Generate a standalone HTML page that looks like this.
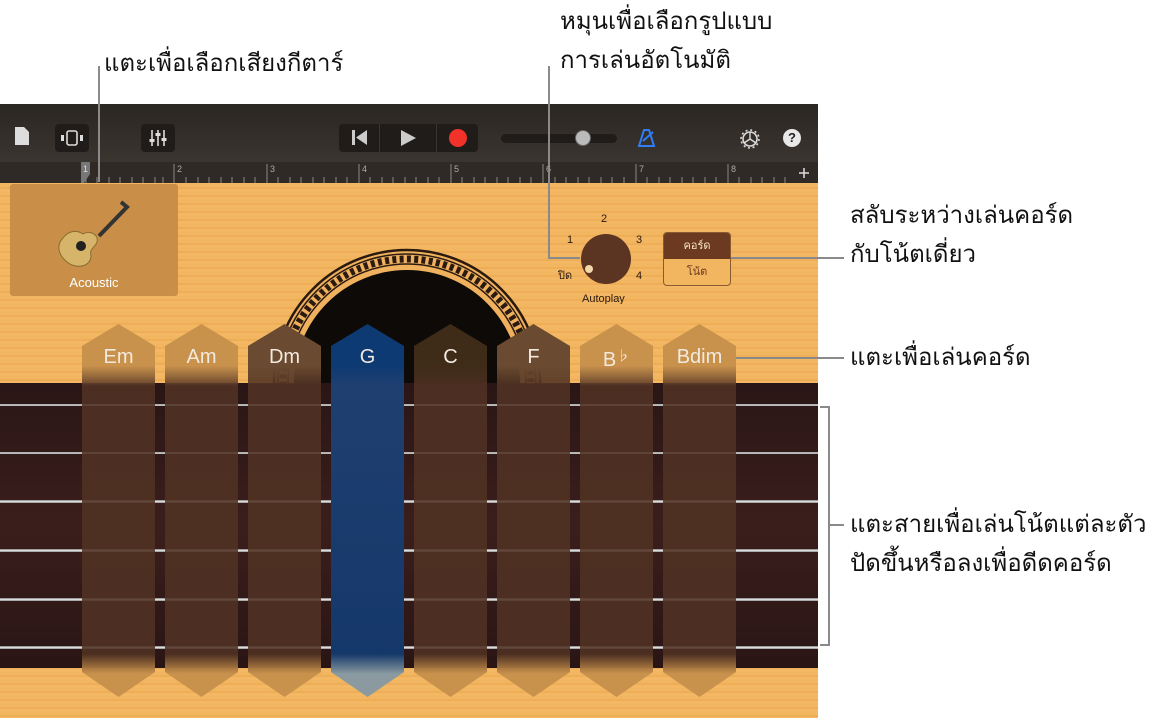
<!DOCTYPE html>
<html><head><meta charset="utf-8"><style>
*{margin:0;padding:0;box-sizing:border-box}
body{width:1170px;height:718px;background:#fff;position:relative;overflow:hidden;font-family:"Liberation Sans","Noto Sans CJK SC",sans-serif}
.abs{position:absolute}
.cap{position:absolute;font-size:24px;color:#111;line-height:39px;white-space:nowrap;font-family:"Liberation Sans","Noto Sans CJK SC",sans-serif}
.ln{position:absolute;background:#8a8a8a}
#app{position:absolute;left:0;top:104px;width:818px;height:614px;overflow:hidden;background:repeating-linear-gradient(180deg,#f2b560 0 3px,#eeae58 3px 5px,#f4b864 5px 8px)}
.tb{position:absolute;left:0;top:0;width:818px;height:58px;background:linear-gradient(#2a2622,#3b3530)}
.ruler{position:absolute;left:0;top:58px;width:818px;height:21px;background:#2f2a26}
.btn{position:absolute;background:#1f1c19;border-radius:4px}
.fret{position:absolute;left:0;top:279px;width:818px;height:285px;background:linear-gradient(180deg,#2a1616,#3a1e1c 50%,#2a1515)}
.str{position:absolute;left:0;width:818px;background:linear-gradient(#777,#eee,#888)}
.chord{position:absolute;width:73px;top:220px;height:373px}
.chord .body{position:absolute;left:0;top:0;width:73px;height:373px;clip-path:polygon(50% 0,100% 22px,100% 348px,50% 100%,0 348px,0 22px)}
.chord span{position:absolute;left:0;width:73px;top:22px;text-align:center;color:#f3eadf;font-size:20px}
</style></head><body>

<div class="cap" style="left:104px;top:44px">แตะเพื่อเลือกเสียงกีตาร์</div>
<div class="cap" style="left:560px;top:2px">หมุนเพื่อเลือกรูปแบบ</div>
<div class="cap" style="left:560px;top:41px">การเล่นอัตโนมัติ</div>
<div class="cap" style="left:850px;top:196px">สลับระหว่างเล่นคอร์ด</div>
<div class="cap" style="left:850px;top:235px">กับโน้ตเดี่ยว</div>
<div class="cap" style="left:850px;top:338px">แตะเพื่อเล่นคอร์ด</div>
<div class="cap" style="left:850px;top:505px">แตะสายเพื่อเล่นโน้ตแต่ละตัว</div>
<div class="cap" style="left:850px;top:544px">ปัดขึ้นหรือลงเพื่อดีดคอร์ด</div>

<div id="app">
  <div class="tb">
    <svg class="abs" style="left:15px;top:23px" width="14" height="18"><path d="M0 0H9L14 5V18H0Z" fill="#ddd"/></svg>
    <div class="btn" style="left:55px;top:20px;width:34px;height:28px"><svg width="34" height="28"><rect x="12" y="7" width="10" height="14" rx="2" fill="none" stroke="#ddd" stroke-width="1.6"/><rect x="6" y="11" width="3" height="6" fill="#ddd"/><rect x="25" y="11" width="3" height="6" fill="#ddd"/></svg></div>
    <div class="btn" style="left:141px;top:20px;width:34px;height:28px"><svg width="34" height="28"><g stroke="#ddd" stroke-width="1.6"><path d="M11 6V22M17 6V22M23 6V22"/></g><g fill="#ddd"><rect x="8.5" y="15" width="5" height="3"/><rect x="14.5" y="9" width="5" height="3"/><rect x="20.5" y="14" width="5" height="3"/></g></svg></div>
    <div class="btn" style="left:339px;top:20px;width:139px;height:28px"></div>
    <div class="abs" style="left:379px;top:20px;width:1px;height:28px;background:#3a3531"></div>
    <div class="abs" style="left:436px;top:20px;width:1px;height:28px;background:#3a3531"></div>
    <svg class="abs" style="left:352px;top:25px" width="16" height="18"><rect x="0" y="1" width="3" height="15" fill="#ccc"/><path d="M15 1V16L4 8.5Z" fill="#ccc"/></svg>
    <svg class="abs" style="left:400px;top:25px" width="16" height="18"><path d="M1 1V17L16 9Z" fill="#ccc"/></svg>
    <div class="abs" style="left:449px;top:25px;width:18px;height:18px;border-radius:50%;background:#f2312a"></div>
    <div class="abs" style="left:501px;top:30px;width:116px;height:9px;border-radius:5px;background:#1f1c19"></div>
    <div class="abs" style="left:575px;top:26px;width:16px;height:16px;border-radius:50%;background:#bbb;border:1px solid #666"></div>
    <svg class="abs" style="left:637px;top:24px" width="20" height="20"><path d="M2 18L7 2H12L17 18Z M6 13L16 4" fill="none" stroke="#2f7ef5" stroke-width="2"/></svg>
    <svg class="abs" style="left:739px;top:24px" width="22" height="22"><circle cx="11" cy="11" r="7" fill="none" stroke="#ddd" stroke-width="1.6"/><circle cx="11" cy="11" r="9" fill="none" stroke="#ddd" stroke-width="1.6" stroke-dasharray="2 2.7"/><path d="M11 11V4M11 11L5 15M11 11L17 15" stroke="#ddd" stroke-width="1.4"/></svg>
    <div class="abs" style="left:783px;top:25px;width:18px;height:18px;border-radius:50%;background:#e8e8e8;color:#222;font-size:13px;font-weight:bold;text-align:center;line-height:18px">?</div>
  </div>
  <div class="ruler">
    <svg width="818" height="21" style="position:absolute;left:0;top:0">
      <g stroke="#888" stroke-width="1">
        <path d="M86 2V21M174 2V21M267 2V21M359 2V21M451 2V21M543 2V21M636 2V21M728 2V21"/>
        <path d="M97 15V21M109 15V21M120 15V21M132 15V21M143 15V21M155 15V21M163 15V21M186 15V21M198 15V21M209 15V21M221 15V21M232 15V21M244 15V21M255 15V21M278 15V21M290 15V21M301 15V21M313 15V21M324 15V21M336 15V21M347 15V21M370 15V21M382 15V21M393 15V21M405 15V21M416 15V21M428 15V21M439 15V21M462 15V21M474 15V21M485 15V21M497 15V21M508 15V21M520 15V21M531 15V21M555 15V21M566 15V21M578 15V21M589 15V21M601 15V21M612 15V21M624 15V21M647 15V21M659 15V21M670 15V21M682 15V21M693 15V21M705 15V21M716 15V21M739 15V21M751 15V21M762 15V21M774 15V21M785 15V21"/>
      </g>
      <g fill="#aaa" font-size="9" font-family="Liberation Sans"><text x="177" y="10">2</text><text x="270" y="10">3</text><text x="362" y="10">4</text><text x="454" y="10">5</text><text x="546" y="10">6</text><text x="639" y="10">7</text><text x="731" y="10">8</text></g>
      <path d="M81 0H90V12L84 21H81Z" fill="#777"/><text x="83" y="10" fill="#ddd" font-size="9">1</text>
      <path d="M799 11H809M804 6V16" stroke="#ddd" stroke-width="1.5"/>
    </svg>
  </div>
  <div class="abs" style="left:10px;top:80px;width:168px;height:112px;background:#c98e48;border-radius:3px"></div>
  <svg class="abs" style="left:55px;top:96px" width="75" height="72"><path d="M66 2L72 7L44 36" stroke="#333" stroke-width="4" fill="none"/><path d="M8 38C14 30 22 30 28 34C34 30 44 34 42 42C40 48 34 48 36 56C36 66 22 70 12 62C2 54 2 44 8 38Z" fill="#d6b56a" stroke="#8a6a30"/><circle cx="26" cy="46" r="5" fill="#222"/></svg>
  <div class="abs" style="left:10px;top:171px;width:168px;text-align:center;color:#fff;font-size:13px">Acoustic</div>

  <svg class="abs" style="left:272px;top:144px" width="270" height="270">
    <circle cx="135" cy="135" r="133" fill="#f0b15e" stroke="#2a1a10" stroke-width="2.5"/>
    <circle cx="135" cy="135" r="129" fill="none" stroke="#2a1a10" stroke-width="1.5"/>
    <circle cx="135" cy="135" r="124" fill="none" stroke="#2a1a10" stroke-width="7" stroke-dasharray="4 3.3"/>
    <circle cx="135" cy="135" r="119" fill="none" stroke="#2a1a10" stroke-width="1.5"/>
    <circle cx="135" cy="135" r="113" fill="#0e0a08"/>
  </svg>

  <svg class="abs" style="left:545px;top:105px" width="120" height="95"><g font-size="11" fill="#2a1a10" font-family="Liberation Sans"><text x="56" y="13">2</text><text x="22" y="34">1</text><text x="91" y="34">3</text><text x="91" y="70">4</text><text x="13" y="70" font-family="Noto Sans CJK SC">ปิด</text></g><circle cx="61" cy="50" r="25" fill="#5b3422"/><circle cx="44" cy="60" r="4" fill="#f4d9a8"/><text x="37" y="93" font-size="11" fill="#2a1a10">Autoplay</text></svg>
  <div class="abs" style="left:663px;top:128px;width:68px;height:54px;border:1px solid #8a5a30;border-radius:4px;overflow:hidden;background:#f2b560">
    <div style="height:26px;background:#6b3a20;color:#f7e3c4;font-size:11px;text-align:center;line-height:26px">คอร์ด</div>
    <div style="height:26px;color:#6b3a20;font-size:11px;text-align:center;line-height:26px">โน้ต</div>
  </div>

  <div class="fret"></div>
  <div class="str" style="top:300px;height:2px"></div>
  <div class="str" style="top:348px;height:2px"></div>
  <div class="str" style="top:396px;height:3px"></div>
  <div class="str" style="top:445px;height:3px"></div>
  <div class="str" style="top:494px;height:3px"></div>
  <div class="str" style="top:542px;height:3px"></div>

  <div class="chord" style="left:82px"><div class="body" style="background:linear-gradient(#c8914c 0 42px,rgba(80,50,35,.88) 62px,rgba(80,50,35,.88) 330px,#c8914c 350px)"></div><span>Em</span></div>
  <div class="chord" style="left:165px"><div class="body" style="background:linear-gradient(#c8914c 0 42px,rgba(80,50,35,.88) 62px,rgba(80,50,35,.88) 330px,#c8914c 350px)"></div><span>Am</span></div>
  <div class="chord" style="left:248px"><div class="body" style="background:linear-gradient(#6a4a30 0 42px,rgba(80,50,35,.88) 62px,rgba(80,50,35,.88) 330px,#c8914c 350px)"></div><span>Dm</span></div>
  <div class="chord" style="left:331px"><div class="body" style="background:linear-gradient(#0d3a72 0 42px,#1f3f70 62px,#15386a 330px,#8a9aa0 350px)"></div><span>G</span></div>
  <div class="chord" style="left:414px"><div class="body" style="background:linear-gradient(#3f2c18 0 42px,rgba(80,50,35,.88) 62px,rgba(80,50,35,.88) 330px,#c8914c 350px)"></div><span>C</span></div>
  <div class="chord" style="left:497px"><div class="body" style="background:linear-gradient(#6a4a30 0 42px,rgba(80,50,35,.88) 62px,rgba(80,50,35,.88) 330px,#c8914c 350px)"></div><span>F</span></div>
  <div class="chord" style="left:580px"><div class="body" style="background:linear-gradient(#c8914c 0 42px,rgba(80,50,35,.88) 62px,rgba(80,50,35,.88) 330px,#c8914c 350px)"></div><span>B<small style="font-size:14px;vertical-align:5px">♭</small></span></div>
  <div class="chord" style="left:663px"><div class="body" style="background:linear-gradient(#c8914c 0 42px,rgba(80,50,35,.88) 62px,rgba(80,50,35,.88) 330px,#c8914c 350px)"></div><span>Bdim</span></div>
</div>

<div class="ln" style="left:98px;top:66px;width:2px;height:116px"></div>
<div class="ln" style="left:548px;top:66px;width:2px;height:193px"></div>
<div class="ln" style="left:548px;top:257px;width:32px;height:2px"></div>
<div class="ln" style="left:731px;top:257px;width:113px;height:2px"></div>
<div class="ln" style="left:736px;top:357px;width:108px;height:2px"></div>
<div class="ln" style="left:820px;top:406px;width:10px;height:2px"></div>
<div class="ln" style="left:828px;top:406px;width:2px;height:240px"></div>
<div class="ln" style="left:820px;top:644px;width:10px;height:2px"></div>
<div class="ln" style="left:828px;top:524px;width:16px;height:2px"></div>
</body></html>
